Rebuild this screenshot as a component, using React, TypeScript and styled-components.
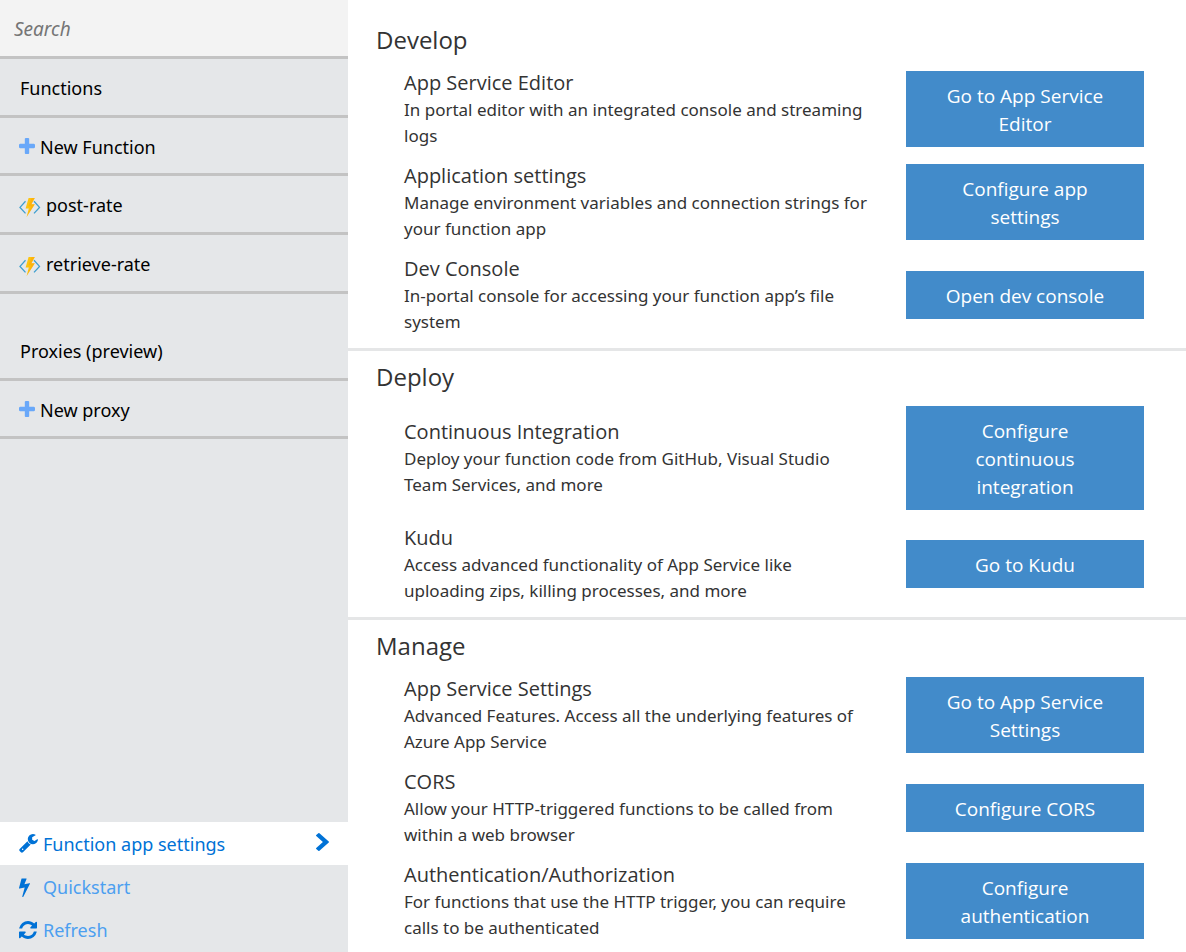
import React from "react";
import styled, { createGlobalStyle } from "styled-components";

const GlobalStyle = createGlobalStyle`
  *, *::before, *::after { box-sizing: border-box; }
  body {
    margin: 0;
    background: #fff;
    color: #333;
    font-family: "Noto Sans", "Open Sans", sans-serif;
  }
  button, input { font-family: inherit; }
`;

const Page = styled.div`
  display: grid;
  grid-template-columns: 348px minmax(0, 1fr);
  min-height: 100vh;
`;

/* ---------- Sidebar ---------- */

const Sidebar = styled.aside`
  display: flex;
  flex-direction: column;
  background: #e5e7e9;
  padding-bottom: 1px;
`;

const SearchBox = styled.input`
  width: 100%;
  height: 59px;
  padding: 2px 14px 0;
  border: 0;
  border-bottom: 3px solid #c3c3c3;
  border-radius: 0;
  background: #f3f3f3;
  color: #000;
  font-size: 19px;
  outline: none;

  &::placeholder {
    color: #757575;
    font-style: italic;
    opacity: 1;
  }
`;

const NavGroup = styled.nav`
  margin-bottom: 28px;
`;

const GroupTitle = styled.h2`
  display: flex;
  align-items: center;
  height: 59px;
  margin: 0;
  padding: 2px 20px 0;
  border-bottom: 3px solid #c3c3c3;
  color: #000;
  font-size: 18px;
  font-weight: 400;
`;

const NavItem = styled.button<{ $height: number }>`
  display: flex;
  align-items: center;
  gap: 5px;
  width: 100%;
  height: ${(p) => p.$height}px;
  padding: 2px 19px 0;
  border: 0;
  border-bottom: 3px solid #c3c3c3;
  background: none;
  color: #000;
  font-size: 18px;
  text-align: left;
  cursor: pointer;
`;

const BottomNav = styled.nav`
  margin-top: auto;
`;

const BottomLink = styled.a<{ $active?: boolean }>`
  display: flex;
  align-items: center;
  height: 43px;
  padding: 0 19px;
  background: ${(p) => (p.$active ? "#fff" : "transparent")};
  color: ${(p) => (p.$active ? "#0072d6" : "#4c9ff0")};
  font-size: 18px;
  text-decoration: none;
`;

const IconSlot = styled.span`
  display: flex;
  flex: none;
  width: 24px;
  color: #0072d6;
`;

const LinkText = styled.span`
  flex: 1;
`;

const Glyph = styled.svg`
  display: block;
  flex: none;
  fill: currentColor;
`;

const PlusGlyph = styled(Glyph)`
  color: #69a8f9;
`;

/* ---------- Main ---------- */

const Main = styled.main`
  padding-top: 4px;
`;

const Section = styled.section`
  padding: 10px 42px 13px 28px;
  border-bottom: 3px solid #e5e6e7;

  &:first-child {
    padding-top: 20px;
  }

  &:last-child {
    padding-bottom: 0;
    border-bottom: 0;
  }
`;

const SectionTitle = styled.h1`
  margin: 0 0 13px;
  font-family: "Open Sans", "Noto Sans", sans-serif;
  font-size: 24px;
  font-weight: 400;
  line-height: 32px;
`;

const Rows = styled.div<{ $gap: number }>`
  display: flex;
  flex-direction: column;
  gap: ${(p) => p.$gap}px;
  padding-left: 28px;
`;

const Row = styled.div`
  display: grid;
  grid-template-columns: minmax(0, 1fr) 238px;
  align-items: center;
  column-gap: 32px;
`;

const RowTitle = styled.h3`
  margin: 0;
  font-family: "Open Sans", "Noto Sans", sans-serif;
  font-size: 20px;
  font-weight: 400;
  line-height: 28px;
`;

const RowText = styled.p`
  margin: 0;
  font-size: 17px;
  line-height: 26px;
`;

const ActionButton = styled.button`
  padding: 11px 36px 9px;
  border: 0;
  background: #428bca;
  color: #fff;
  font-family: "Open Sans", "Noto Sans", sans-serif;
  font-size: 19px;
  line-height: 28px;
  text-align: center;
  cursor: pointer;
`;

/* ---------- Icons ---------- */

const PlusIcon = () => (
  <PlusGlyph width="16" height="18" viewBox="192 128 1408 1584" aria-hidden="true">
    <path d="M1600 736v192q0 40-28 68t-68 28h-416v416q0 40-28 68t-68 28h-192q-40 0-68-28t-28-68v-416h-416q-40 0-68-28t-28-68v-192q0-40 28-68t68-28h416v-416q0-40 28-68t68-28h192q40 0 68 28t28 68v416h416q40 0 68 28t28 68z" />
  </PlusGlyph>
);

const FunctionIcon = () => (
  <Glyph width="22" height="23" viewBox="0 -4 22 23" aria-hidden="true">
    <path d="M6.5 3.2L1 9.4l5.5 6M15 3.2l5.5 6.2-5.5 6" fill="none" stroke="#3f9fcf" strokeWidth="1.3" />
    <path d="M9.6 0h6.2l-3.4 6.2h3.4L7.6 19l2.2-8.6H6.6z" fill="#fcc40f" />
    <path d="M12.6 0h3.2l-3.4 6.2h3.4L7.6 19l4.6-10.8H9.4z" fill="#ff9f08" fillOpacity="0.45" />
  </Glyph>
);

const WrenchIcon = () => (
  <Glyph width="19" height="19" viewBox="64 128 1664 1664" aria-hidden="true">
    <path d="M448 1472q0-26-19-45t-45-19-45 19-19 45 19 45 45 19 45-19 19-45zm644-420l-682 682q-37 37-90 37-52 0-91-37l-106-108q-38-36-38-90 0-53 38-91l681-681q39 98 114.5 173.5t173.5 114.5zm634-435q0 39-23 106-47 134-164.5 217.5t-258.5 83.5q-185 0-316.5-131.5t-131.5-316.5 131.5-316.5 316.5-131.5q58 0 121.5 16.5t107.5 46.5q16 11 16 28t-16 28l-293 169v224l193 107q5-3 79-48.5t135.5-81 70.5-35.5q15 0 23.5 10t8.5 25z" />
  </Glyph>
);

const BoltIcon = () => (
  <Glyph width="11" height="20" viewBox="448 0 896 1792" preserveAspectRatio="none" aria-hidden="true">
    <path d="M1333 566q18 20 7 44l-540 1157q-13 25-42 25-4 0-14-2-17-5-25.5-19t-4.5-30l197-808-406 101q-4 1-12 1-18 0-31-11-18-15-13-39l201-825q4-14 16-23t28-9h328q19 0 32 12.5t13 29.5q0 8-5 18l-171 463 396-98q8-2 12-2 19 0 34 15z" />
  </Glyph>
);

const RefreshIcon = () => (
  <Glyph width="18" height="18" viewBox="128 128 1536 1536" aria-hidden="true">
    <path d="M1639 1056q0 5-1 7-64 268-268 434.5t-478 166.5q-146 0-282.5-55t-243.5-157l-129 129q-19 19-45 19t-45-19-19-45v-448q0-26 19-45t45-19h448q26 0 45 19t19 45-19 45l-137 137q71 66 161 102t187 36q134 0 250-65t186-179q11-17 53-117 8-23 30-23h192q13 0 22.5 9.5t9.5 22.5zm25-800v448q0 26-19 45t-45 19h-448q-26 0-45-19t-19-45 19-45l138-138q-148-137-349-137-134 0-250 65t-186 179q-11 17-53 117-8 23-30 23h-199q-13 0-22.5-9.5t-9.5-22.5v-7q65-268 270-434.5t480-166.5q146 0 284 55.5t245 156.5l130-129q19-19 45-19t45 19 19 45z" />
  </Glyph>
);

const ChevronIcon = () => (
  <Glyph width="13" height="22" viewBox="346 26 1036 1970" preserveAspectRatio="none" aria-hidden="true">
    <path d="M1363 877l-742 742q-19 19-45 19t-45-19l-166-166q-19-19-19-45t19-45l531-531-531-531q-19-19-19-45t19-45l166-166q19-19 45-19t45 19l742 742q19 19 19 45t-19 45z" />
  </Glyph>
);

/* ---------- Content ---------- */

interface Feature {
  title: string;
  text: string;
  action: string;
}

interface FeatureSection {
  title: string;
  gap: number;
  features: Feature[];
}

const sections: FeatureSection[] = [
  {
    title: "Develop",
    gap: 13,
    features: [
      {
        title: "App Service Editor",
        text: "In portal editor with an integrated console and streaming logs",
        action: "Go to App Service Editor",
      },
      {
        title: "Application settings",
        text: "Manage environment variables and connection strings for your function app",
        action: "Configure app settings",
      },
      {
        title: "Dev Console",
        text: "In-portal console for accessing your function app’s file system",
        action: "Open dev console",
      },
    ],
  },
  {
    title: "Deploy",
    gap: 14,
    features: [
      {
        title: "Continuous Integration",
        text: "Deploy your function code from GitHub, Visual Studio Team Services, and more",
        action: "Configure continuous integration",
      },
      {
        title: "Kudu",
        text: "Access advanced functionality of App Service like uploading zips, killing processes, and more",
        action: "Go to Kudu",
      },
    ],
  },
  {
    title: "Manage",
    gap: 13,
    features: [
      {
        title: "App Service Settings",
        text: "Advanced Features. Access all the underlying features of Azure App Service",
        action: "Go to App Service Settings",
      },
      {
        title: "CORS",
        text: "Allow your HTTP-triggered functions to be called from within a web browser",
        action: "Configure CORS",
      },
      {
        title: "Authentication/Authorization",
        text: "For functions that use the HTTP trigger, you can require calls to be authenticated",
        action: "Configure authentication",
      },
    ],
  },
];

const functionNames = ["post-rate", "retrieve-rate"];

export default function App() {
  return (
    <>
      <GlobalStyle />
      <Page>
        <Sidebar>
          <SearchBox type="text" placeholder="Search" aria-label="Search" />
          <NavGroup aria-label="Functions">
            <GroupTitle>Functions</GroupTitle>
            <NavItem type="button" $height={58}>
              <PlusIcon />
              New Function
            </NavItem>
            {functionNames.map((name) => (
              <NavItem key={name} type="button" $height={59}>
                <FunctionIcon />
                {name}
              </NavItem>
            ))}
          </NavGroup>
          <NavGroup aria-label="Proxies">
            <GroupTitle>Proxies (preview)</GroupTitle>
            <NavItem type="button" $height={58}>
              <PlusIcon />
              New proxy
            </NavItem>
          </NavGroup>
          <BottomNav aria-label="App">
            <BottomLink href="#settings" $active>
              <IconSlot>
                <WrenchIcon />
              </IconSlot>
              <LinkText>Function app settings</LinkText>
              <ChevronIcon />
            </BottomLink>
            <BottomLink href="#quickstart">
              <IconSlot>
                <BoltIcon />
              </IconSlot>
              <LinkText>Quickstart</LinkText>
            </BottomLink>
            <BottomLink href="#refresh">
              <IconSlot>
                <RefreshIcon />
              </IconSlot>
              <LinkText>Refresh</LinkText>
            </BottomLink>
          </BottomNav>
        </Sidebar>
        <Main>
          {sections.map((section) => (
            <Section key={section.title}>
              <SectionTitle>{section.title}</SectionTitle>
              <Rows $gap={section.gap}>
                {section.features.map((feature) => (
                  <Row key={feature.title}>
                    <div>
                      <RowTitle>{feature.title}</RowTitle>
                      <RowText>{feature.text}</RowText>
                    </div>
                    <ActionButton type="button">{feature.action}</ActionButton>
                  </Row>
                ))}
              </Rows>
            </Section>
          ))}
        </Main>
      </Page>
    </>
  );
}
